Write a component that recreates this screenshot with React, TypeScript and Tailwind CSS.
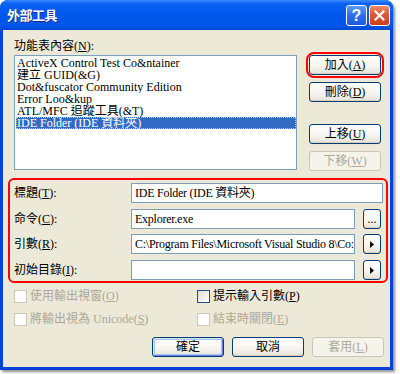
import React from "react";

const btn =
  "flex items-center justify-center rounded-[3px] border text-[12px] leading-none";
const enabledBtn =
  "border-[#003C74] bg-[linear-gradient(180deg,#FFFFFF_0%,#F6F5F0_55%,#E6E2D6_100%)] text-black shadow-[inset_0_-1px_0_#D6D0C0]";
const disabledBtn = "border-[#C9C7BA] bg-[#F5F4EA] text-[#ACA899]";

function Btn({
  children,
  disabled,
  extra = "",
}: {
  children: React.ReactNode;
  disabled?: boolean;
  extra?: string;
}) {
  return (
    <div
      className={`${btn} ${disabled ? disabledBtn : enabledBtn} w-[72px] h-[20px] ${extra}`}
    >
      {children}
    </div>
  );
}

function Acc({ k }: { k: string }) {
  return (
    <>
      (<span className="underline underline-offset-[1px]">{k}</span>)
    </>
  );
}

function Check({
  disabled,
  children,
}: {
  disabled?: boolean;
  children: React.ReactNode;
}) {
  return (
    <div className="flex items-center h-[13px]">
      <div
        className={`w-[13px] h-[13px] border ${
          disabled
            ? "border-[#CAC8BB] bg-white"
            : "border-[#1C5180] bg-[linear-gradient(135deg,#DCDCD7_0%,#FFFFFF_100%)]"
        }`}
      />
      <span
        className={`ml-[3px] text-[12px] leading-[13px] whitespace-nowrap ${
          disabled ? "text-[#ACA899]" : "text-black"
        }`}
      >
        {children}
      </span>
    </div>
  );
}

function SmallBtn({ children }: { children: React.ReactNode }) {
  return (
    <div
      className={`${btn} ${enabledBtn} w-[18px] h-[20px] ml-[8px] text-[11px]`}
    >
      {children}
    </div>
  );
}

function Arrow() {
  return (
    <svg width="4" height="7" viewBox="0 0 4 7">
      <path d="M0 0 L4 3.5 L0 7 Z" fill="#000" />
    </svg>
  );
}

function Field({
  label,
  value,
  wide,
  button,
}: {
  label: React.ReactNode;
  value?: string;
  wide?: boolean;
  button?: React.ReactNode;
}) {
  return (
    <div className="flex items-center h-[20px]">
      <div className="w-[121px] pl-[4px] text-[12px] leading-[14px] whitespace-nowrap">
        {label}
      </div>
      <div
        className={`${
          wide ? "w-[252px]" : "w-[224px]"
        } h-[20px] border border-[#7F9DB9] bg-white pl-[3px] text-[12px] leading-[18px] whitespace-nowrap overflow-hidden tracking-[-0.25px]`}
      >
        {value}
      </div>
      {button}
    </div>
  );
}

export default function App() {
  const items = [
    "ActiveX Control Test Co&ntainer",
    "建立 GUID(&G)",
    "Dot&fuscator Community Edition",
    "Error Loo&kup",
    "ATL/MFC 追蹤工具(&T)",
    "IDE Folder (IDE 資料夾)",
  ];
  return (
    <div className="w-[400px] h-[374px] bg-white overflow-hidden font-['Liberation_Serif','Noto_Sans_CJK_TC',serif] text-black">
      <div className="w-[393px] h-[370px] flex flex-col rounded-t-[8px] bg-[#0842D8] shadow-[2px_2px_3px_rgba(0,0,0,0.45)]">
        {/* Title bar */}
        <div className="h-[30px] flex items-center rounded-t-[8px] bg-[linear-gradient(180deg,#3C8CFE_0%,#0B62F4_12%,#0058EE_45%,#0056E8_85%,#0048CF_100%)] pl-[7px] pr-[3px]">
          <span className="text-white font-bold text-[13px] font-['Noto_Sans_CJK_TC','Noto_Sans',sans-serif] tracking-[-0.5px] [text-shadow:1px_1px_0_#0A2E96]">
            外部工具
          </span>
          <div className="ml-auto flex gap-[2px] mt-[1px]">
            <div className="w-[21px] h-[21px] rounded-[3px] border border-white bg-[linear-gradient(180deg,#5A9BFF_0%,#2B6EF0_50%,#1E5BDB_100%)] flex items-center justify-center">
              <span className="text-white font-bold text-[16px] leading-none font-['Liberation_Sans',sans-serif]">
                ?
              </span>
            </div>
            <div className="w-[21px] h-[21px] rounded-[3px] border border-white bg-[linear-gradient(180deg,#E98B6B_0%,#DC5530_50%,#C9411C_100%)] flex items-center justify-center">
              <svg width="11" height="11" viewBox="0 0 11 11">
                <path
                  d="M1.5 1.5 L9.5 9.5 M9.5 1.5 L1.5 9.5"
                  stroke="#fff"
                  strokeWidth="2.2"
                  strokeLinecap="square"
                />
              </svg>
            </div>
          </div>
        </div>
        {/* Client */}
        <div className="flex-1 mx-[3px] mb-[3px] bg-[#ECE9D8] flex flex-col">
          {/* top section */}
          <div className="flex mt-[9px] ml-[11px]">
            <div className="w-[283px] flex flex-col">
              <div className="h-[16px] text-[12px] leading-[14px]">
                功能表內容<Acc k="N" />:
              </div>
              <div className="h-[115px] border border-[#7F9DB9] bg-white py-[1px] pr-0 pl-[1px] flex flex-col">
                {items.map((t, i) => (
                  <div
                    key={i}
                    className={`h-[12px] leading-[12px] text-[12px] pl-[1px] whitespace-nowrap overflow-hidden ${
                      i === 5
                        ? "bg-[#316AC5] text-white outline outline-1 outline-dotted outline-[#E9C37A] -outline-offset-1"
                        : ""
                    }`}
                  >
                    {t}
                  </div>
                ))}
              </div>
            </div>
            <div className="ml-[12px] flex flex-col">
              <div className="mt-[16px] rounded-[5px] outline-2 outline-[#FF0000] outline-offset-[1px]">
                <Btn>
                  加入<Acc k="A" />
                </Btn>
              </div>
              <Btn extra="mt-[7px]">
                刪除<Acc k="D" />
              </Btn>
              <Btn extra="mt-[22px]">
                上移<Acc k="U" />
              </Btn>
              <Btn disabled extra="mt-[7px]">
                下移<Acc k="W" />
              </Btn>
            </div>
          </div>
          {/* fields */}
          <div className="mt-[7px] ml-[5px] w-[380px] h-[105px] border-2 border-[#FF0000] rounded-[6px] flex flex-col pt-[3px]">
            <Field
              label={
                <>
                  標題<Acc k="T" />:
                </>
              }
              value="IDE Folder (IDE 資料夾)"
              wide
            />
            <div className="mt-[6px]">
              <Field
                label={
                  <>
                    命令<Acc k="C" />:
                  </>
                }
                value="Explorer.exe"
                button={<SmallBtn>...</SmallBtn>}
              />
            </div>
            <div className="mt-[5px]">
              <Field
                label={
                  <>
                    引數<Acc k="R" />:
                  </>
                }
                value="C:\Program Files\Microsoft Visual Studio 8\Co:"
                button={
                  <SmallBtn>
                    <Arrow />
                  </SmallBtn>
                }
              />
            </div>
            <div className="mt-[6px]">
              <Field
                label={
                  <>
                    初始目錄<Acc k="I" />:
                  </>
                }
                value=""
                button={
                  <SmallBtn>
                    <Arrow />
                  </SmallBtn>
                }
              />
            </div>
          </div>
          {/* checkboxes */}
          <div className="mt-[7px] ml-[11px] flex">
            <div className="w-[183px]">
              <Check disabled>
                使用輸出視窗<Acc k="O" />
              </Check>
            </div>
            <Check>
              提示輸入引數<Acc k="P" />
            </Check>
          </div>
          <div className="mt-[10px] ml-[11px] flex">
            <div className="w-[183px]">
              <Check disabled>
                將輸出視為 Unicode<Acc k="S" />
              </Check>
            </div>
            <Check disabled>
              結束時關閉<Acc k="E" />
            </Check>
          </div>
          {/* bottom buttons */}
          <div className="mt-[11px] ml-[149px] flex gap-[8px]">
            <Btn extra="shadow-[inset_1px_1px_0_#CEE7FF,inset_-1px_-1px_0_#6982EE,inset_0_0_0_2px_#A8C5F5]">
              確定
            </Btn>
            <Btn>取消</Btn>
            <Btn disabled>
              套用<Acc k="L" />
            </Btn>
          </div>
        </div>
      </div>
    </div>
  );
}
